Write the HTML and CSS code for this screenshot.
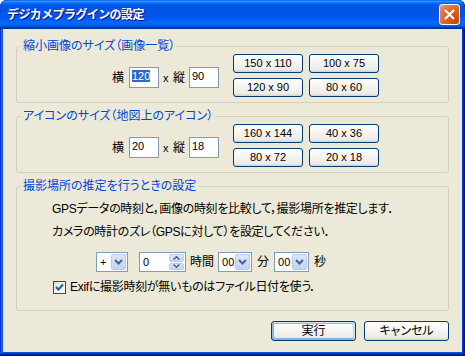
FILE: index.html
```html
<!DOCTYPE html>
<html lang="ja">
<head>
    <meta charset="UTF-8">
    <title>デジカメプラグインの設定</title>
    <link rel="stylesheet" href="styles.css">
</head>
<body>
    <div class="window">
        <div class="titlebar">
            <span class="title">デジカメプラグインの設定</span>
            <span class="close">
                <svg width="13" height="13" viewBox="0 0 13 13"><path d="M2 2 L11 11 M11 2 L2 11" stroke="#fff" stroke-width="2.2" fill="none"/></svg>
            </span>
        </div>
        <div class="client">
            <fieldset class="group">
                <legend>縮小画像のサイズ（画像一覧）</legend>
                <div class="size-row">
                    <div class="size-fields">
                        <span class="lbl">横</span>
                        <span class="field"><span class="selected">120</span></span>
                        <span class="times">x</span>
                        <span class="lbl">縦</span>
                        <span class="field">90</span>
                    </div>
                    <div class="presets">
                        <button class="btn">150 x 110</button>
                        <button class="btn">100 x 75</button>
                        <button class="btn">120 x 90</button>
                        <button class="btn">80 x 60</button>
                    </div>
                </div>
            </fieldset>

            <fieldset class="group">
                <legend>アイコンのサイズ（地図上のアイコン）</legend>
                <div class="size-row">
                    <div class="size-fields">
                        <span class="lbl">横</span>
                        <span class="field">20</span>
                        <span class="times">x</span>
                        <span class="lbl">縦</span>
                        <span class="field">18</span>
                    </div>
                    <div class="presets">
                        <button class="btn">160 x 144</button>
                        <button class="btn">40 x 36</button>
                        <button class="btn">80 x 72</button>
                        <button class="btn">20 x 18</button>
                    </div>
                </div>
            </fieldset>

            <fieldset class="group">
                <legend>撮影場所の推定を行うときの設定</legend>
                <div class="gps">
                    <p class="note">GPSデータの時刻と，画像の時刻を比較して，撮影場所を推定します．</p>
                    <p class="note second">カメラの時計のズレ（GPSに対して）を設定してください．</p>
                    <div class="offset-row">
                        <span class="combo sign"><span class="val">+</span><span class="drop"><svg width="9" height="6" viewBox="0 0 9 6"><path d="M1 1 L4.5 4.5 L8 1" stroke="#4d6185" stroke-width="2" fill="none"/></svg></span></span>
                        <span class="spin"><span class="val">0</span><span class="arrows"><span class="up"><svg width="7" height="4" viewBox="0 0 7 4"><path d="M0.5 3.5 L3.5 0.8 L6.5 3.5" stroke="#4d6185" stroke-width="1.5" fill="none"/></svg></span><span class="down"><svg width="7" height="4" viewBox="0 0 7 4"><path d="M0.5 0.5 L3.5 3.2 L6.5 0.5" stroke="#4d6185" stroke-width="1.5" fill="none"/></svg></span></span></span>
                        <span class="unit hour">時間</span>
                        <span class="combo mins"><span class="val">00</span><span class="drop"><svg width="9" height="6" viewBox="0 0 9 6"><path d="M1 1 L4.5 4.5 L8 1" stroke="#4d6185" stroke-width="2" fill="none"/></svg></span></span>
                        <span class="unit">分</span>
                        <span class="combo secs"><span class="val">00</span><span class="drop"><svg width="9" height="6" viewBox="0 0 9 6"><path d="M1 1 L4.5 4.5 L8 1" stroke="#4d6185" stroke-width="2" fill="none"/></svg></span></span>
                        <span class="unit">秒</span>
                    </div>
                    <label class="check">
                        <span class="box"><svg width="9" height="9" viewBox="0 0 9 9"><path d="M1 4 L3.5 6.5 L8 1.5" stroke="#2a5b9c" stroke-width="2" fill="none"/></svg></span>
                        <span>Exifに撮影時刻が無いものはファイル日付を使う．</span>
                    </label>
                </div>
            </fieldset>

            <div class="actions">
                <button class="btn wide default">実行</button>
                <button class="btn wide">キャンセル</button>
            </div>
        </div>
    </div>
</body>
</html>
```

FILE: styles.css
```css
* {
    box-sizing: border-box;
}

body {
    margin: 0;
    font: 12px/14px "Liberation Sans", "Noto Sans CJK JP", sans-serif;
    font-feature-settings: "palt";
    color: #000;
    background: #fff;
}

.window {
    width: 465px;
    height: 356px;
    display: flex;
    flex-direction: column;
    background: #0855dd;
    border-radius: 7px 7px 0 0;
    box-shadow: inset -1px -1px #00138c, inset 1px 1px #0831d9,
        inset -2px -2px #001ea0, inset 2px 2px #166aee,
        inset -3px -3px #003bda, inset 3px 3px #0855dd;
    overflow: hidden;
}

.titlebar {
    height: 29px;
    flex: none;
    display: flex;
    align-items: center;
    padding: 0 5px 0 7px;
    border-radius: 7px 7px 0 0;
    background: linear-gradient(180deg, #0058ee 0%, #3a93ff 4%, #288eff 6%, #127dff 8%,
        #036ffc 10%, #0262ee 14%, #0057e5 20%, #0054e3 24%, #0055eb 56%,
        #005bf5 66%, #026afe 76%, #0062ef 86%, #0052d6 92%, #0040ab 94%, #003092 100%);
}

.title {
    flex: 1;
    color: #fff;
    font-weight: bold;
    font-size: 12px;
    font-feature-settings: normal;
    letter-spacing: -0.6px;
    text-shadow: 1px 1px #0f1089;
    padding-top: 1px;
}

.close {
    width: 21px;
    height: 21px;
    display: flex;
    align-items: center;
    justify-content: center;
    border: 1px solid #fff;
    border-radius: 3px;
    background: radial-gradient(circle at 85% 85%, #cc4600 0%, #dc6527 50%, #e07a50 75%, #f0a080 100%);
}

.client {
    flex: 1;
    margin: 0 3px 4px;
    background: #ece9d8;
    padding: 10px 13px 0;
}

.group {
    margin: 0 0 6px;
    padding: 0;
    border: 1px solid #d0d0bf;
    border-radius: 3px;
}

.group legend {
    margin-left: 4px;
    padding: 0 2px;
    color: #0046d5;
    line-height: 14px;
}

.size-row {
    display: flex;
    align-items: flex-start;
    padding: 1px 0 5px 95px;
}

.size-fields {
    display: flex;
    align-items: center;
    gap: 4px;
    margin-top: 13px;
    margin-right: 14px;
}

.lbl {
    width: 12px;
}

.size-fields .lbl:first-child {
    margin-right: 1px;
}

.field {
    width: 30px;
    height: 21px;
    border: 1px solid #7f9db9;
    background: #fff;
    font-size: 11px;
    line-height: 15px;
    padding: 1px 0 0 2px;
}

.selected {
    background: #316ac5;
    color: #fff;
}

.times {
    font-size: 11px;
    width: 6px;
}

.presets {
    display: grid;
    grid-template-columns: 70px 70px;
    grid-auto-rows: 19px;
    column-gap: 6px;
    row-gap: 5px;
}

.btn {
    margin: 0;
    padding: 0;
    font: 11px/15px "Liberation Sans", "Noto Sans CJK JP", sans-serif;
    font-feature-settings: "palt";
    color: #000;
    border: 1px solid #003c74;
    border-radius: 3px;
    background: linear-gradient(180deg, #fff, #ecebe6 86%, #d6d0c5);
}

.gps {
    padding: 9px 0 16px 35px;
}

.note {
    margin: 0;
    letter-spacing: -0.3px;
}

.note.second {
    margin-top: 9px;
}

.offset-row {
    display: flex;
    align-items: center;
    gap: 4px;
    margin: 13px 0 0 44px;
    height: 20px;
}

.combo,
.spin {
    display: flex;
    height: 20px;
    border: 1px solid #7f9db9;
    background: #fff;
    padding: 1px;
}

.val {
    flex: 1;
    font-size: 11px;
    line-height: 16px;
    padding-left: 2px;
}

.drop {
    width: 15px;
    display: flex;
    align-items: center;
    justify-content: center;
    border: 1px solid #b9cbf3;
    border-radius: 2px;
    background: linear-gradient(180deg, #dce6fd, #c1d3fb);
}

.sign {
    width: 32px;
}

.spin {
    width: 47px;
    margin-left: 7px;
}

.arrows {
    width: 15px;
    display: flex;
    flex-direction: column;
    gap: 1px;
}

.arrows span {
    flex: 1;
    display: flex;
    align-items: center;
    justify-content: center;
    border: 1px solid #b9cbf3;
    border-radius: 2px;
    background: linear-gradient(180deg, #dce6fd, #c1d3fb);
}

.mins {
    width: 34px;
}

.hour {
    margin-right: -1px;
}

.secs {
    width: 35px;
    margin-left: 2px;
}

.unit + .combo,
.combo + .unit {
    margin-left: 1px;
}

.check {
    display: flex;
    align-items: center;
    gap: 4px;
    margin: 8px 0 0 1px;
    letter-spacing: -0.3px;
}

.box {
    width: 13px;
    height: 13px;
    display: flex;
    align-items: center;
    justify-content: center;
    border: 1px solid #1c5180;
    background: linear-gradient(135deg, #dcdcd7, #fff);
}

.actions {
    display: flex;
    justify-content: flex-end;
    gap: 8px;
    margin-top: 10px;
}

.btn.wide {
    width: 85px;
    height: 20px;
    font-size: 12px;
}

.btn.default {
    box-shadow: inset -1px 1px #cee7ff, inset 1px 2px #98b8ea,
        inset -2px 2px #bcd4f6, inset 1px -1px #89ade4, inset 2px -2px #89ade4;
}
```
